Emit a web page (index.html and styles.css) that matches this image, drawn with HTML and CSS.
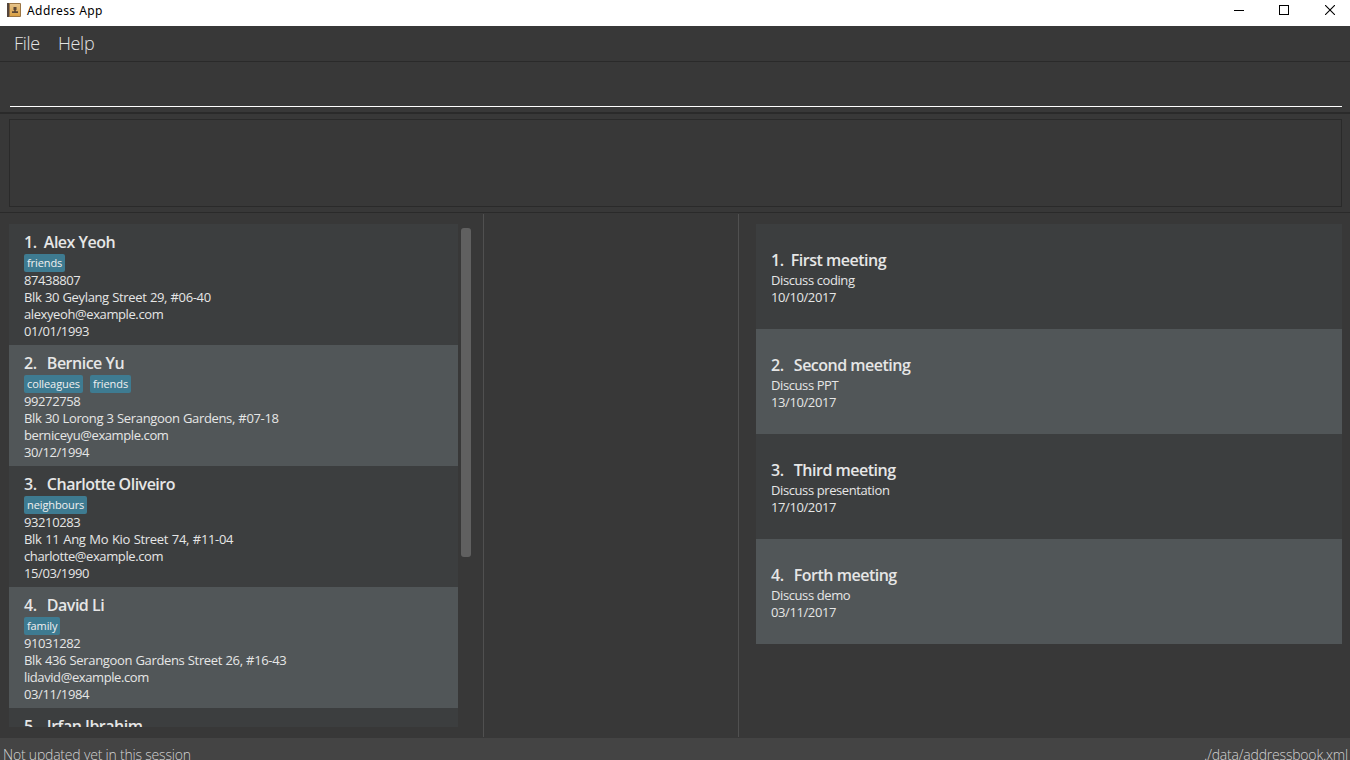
FILE: index.html
```html
<!DOCTYPE html>
<html lang="en">
<head>
<meta charset="utf-8">
<title>Address App</title>
<link rel="stylesheet" href="styles.css">
</head>
<body>
<div class="window">
  <header class="titlebar">
    <svg class="app-icon" width="14" height="14" viewBox="0 0 14 14">
      <defs><linearGradient id="cover" x1="0" y1="0" x2="0" y2="1"><stop offset="0" stop-color="#e6c48c"/><stop offset="1" stop-color="#d99f42"/></linearGradient></defs>
      <rect width="14" height="14" rx="1" fill="#9b7544"/>
      <rect width="2" height="14" fill="#54453c"/>
      <rect x="3" y="1" width="10" height="12" fill="url(#cover)"/>
      <path d="M7 4h2.500v3h-.7v1.200h2.200v1.800h-6v-1.800h2.200v-1.200h-.7v-3z" fill="#5b4635"/>
    </svg>
    <h1 class="title">Address App</h1>
    <div class="controls">
      <svg class="minimize" width="10" height="10" viewBox="0 0 10 10"><path d="M0 5.500h10" stroke="#000"/></svg>
      <svg width="10" height="10" viewBox="0 0 10 10"><rect x=".5" y=".5" width="9" height="9" fill="none" stroke="#000"/></svg>
      <svg width="10" height="10" viewBox="0 0 10 10"><path d="M0 0l10 10M10 0L0 10" stroke="#000" stroke-width="1.100"/></svg>
    </div>
  </header>
  <nav class="menubar"><span class="menu-file">File</span><span class="menu-help">Help</span></nav>
  <div class="command"><div class="command-input"></div></div>
  <div class="result"><div class="result-box"></div></div>
  <main class="content">
    <section class="people-pane">
      <div class="people">
        <article class="card"><h2 class="name"><span class="num num-first">1.</span>Alex Yeoh</h2><div class="tags"><span class="tag">friends</span></div><p>87438807</p><p class="address">Blk 30 Geylang Street 29, #06-40</p><p>alexyeoh@example.com</p><p>01/01/1993</p></article>
        <article class="card"><h2 class="name"><span class="num">2.</span>Bernice Yu</h2><div class="tags"><span class="tag">colleagues</span><span class="tag">friends</span></div><p>99272758</p><p class="address">Blk 30 Lorong 3 Serangoon Gardens, #07-18</p><p>berniceyu@example.com</p><p>30/12/1994</p></article>
        <article class="card"><h2 class="name"><span class="num">3.</span>Charlotte Oliveiro</h2><div class="tags"><span class="tag">neighbours</span></div><p>93210283</p><p class="address address-wide">Blk 11 Ang Mo Kio Street 74, #11-04</p><p>charlotte@example.com</p><p>15/03/1990</p></article>
        <article class="card"><h2 class="name"><span class="num">4.</span>David Li</h2><div class="tags"><span class="tag">family</span></div><p>91031282</p><p class="address">Blk 436 Serangoon Gardens Street 26, #16-43</p><p>lidavid@example.com</p><p>03/11/1984</p></article>
        <article class="card"><h2 class="name"><span class="num">5.</span>Irfan Ibrahim</h2></article>
      </div>
      <div class="scrollbar"><div class="thumb"></div></div>
    </section>
    <section class="middle-pane"></section>
    <section class="meetings">
      <article class="card meeting"><h2 class="name"><span class="num num-first">1.</span>First meeting</h2><p>Discuss coding</p><p>10/10/2017</p></article>
      <article class="card meeting"><h2 class="name"><span class="num">2.</span>Second meeting</h2><p>Discuss PPT</p><p>13/10/2017</p></article>
      <article class="card meeting"><h2 class="name"><span class="num">3.</span>Third meeting</h2><p>Discuss presentation</p><p>17/10/2017</p></article>
      <article class="card meeting"><h2 class="name"><span class="num">4.</span>Forth meeting</h2><p>Discuss demo</p><p>03/11/2017</p></article>
    </section>
  </main>
  <footer class="status"><span class="sync">Not updated yet in this session</span><span class="path">./data/addressbook.xml</span></footer>
</div>
</body>
</html>
```
FILE: styles.css
```css
* { box-sizing: border-box; }
body { margin: 0; background: #383838; font-family: "Open Sans", "Noto Sans", sans-serif; }
h1, h2, p { margin: 0; }
.window { display: flex; flex-direction: column; width: 1350px; height: 760px; overflow: hidden; }

.titlebar { display: flex; align-items: center; flex: none; height: 26px; padding: 0 15px 6px 7px; background: #fff; }
.app-icon { flex: none; }
.title { margin-left: 6px; padding-top: 2px; color: #000; font: 400 12px/20px "Noto Sans", sans-serif; letter-spacing: 0.45px; }
.controls { display: flex; gap: 36px; margin-left: auto; }
.controls svg { display: block; }
.controls .minimize { margin-right: -1px; }

.menubar { display: flex; flex: none; gap: 18px; height: 36px; padding-left: 14px; border-bottom: 1px solid #2a2a2a; color: #e4e4e4; font-size: 18px; font-weight: 300; line-height: 35px; }
.menu-file { letter-spacing: -0.3px; }
.menu-help { letter-spacing: -0.3px; }

.command { flex: none; height: 52px; padding: 0 8px 0 10px; border-bottom: 2px solid #2a2a2a; }
.command-input { height: 45px; border-bottom: 1px solid #fff; }
.result { flex: none; height: 99px; padding: 5px 8px 5px 9px; border-bottom: 1px solid #2a2a2a; }
.result-box { height: 88px; border: 1px solid #2a2a2a; }

.content { display: flex; flex: none; height: 525px; padding: 1px 0; }
.people-pane { display: flex; width: 484px; padding: 10px 12px 10px 9px; border-right: 1px solid #505050; }
.people { width: 449px; height: 503px; overflow: hidden; }
.scrollbar { width: 10px; margin-left: 3px; padding-top: 4px; }
.thumb { height: 329px; border-radius: 3px; background: #606060; }
.middle-pane { width: 255px; border-right: 1px solid #505050; }
.meetings { flex: 1; padding: 10px 8px 0 17px; }

.card { height: 121px; padding: 5px 15px; background: #3c3e3f; color: #e6e6e6; font-size: 13px; line-height: 17px; letter-spacing: -0.4px; }
.card:nth-child(even) { background: #515658; }
.address { letter-spacing: -0.35px; word-spacing: 0.4px; }
.address-wide { word-spacing: 0.8px; }
.name { height: 25px; font-size: 16px; font-weight: 600; line-height: 26px; letter-spacing: -0.5px; white-space: nowrap; }
.num { margin-right: 10.3px; }
.num-first { margin-right: 7.3px; }
.tags { display: flex; gap: 7px; height: 18px; }
.tag { height: 18px; padding: 0 3px; border-radius: 2px; background: #3e7b91; color: #f0f0f0; font-size: 11px; line-height: 18px; letter-spacing: -0.1px; }
.meeting { height: 105px; padding-top: 23px; }

.status { display: flex; justify-content: space-between; flex: none; height: 22px; padding: 5px 2px 0 3px; background: #444; color: #d2d2d2; font-size: 14px; font-weight: 300; line-height: 24px; letter-spacing: -0.2px; white-space: nowrap; }
```
